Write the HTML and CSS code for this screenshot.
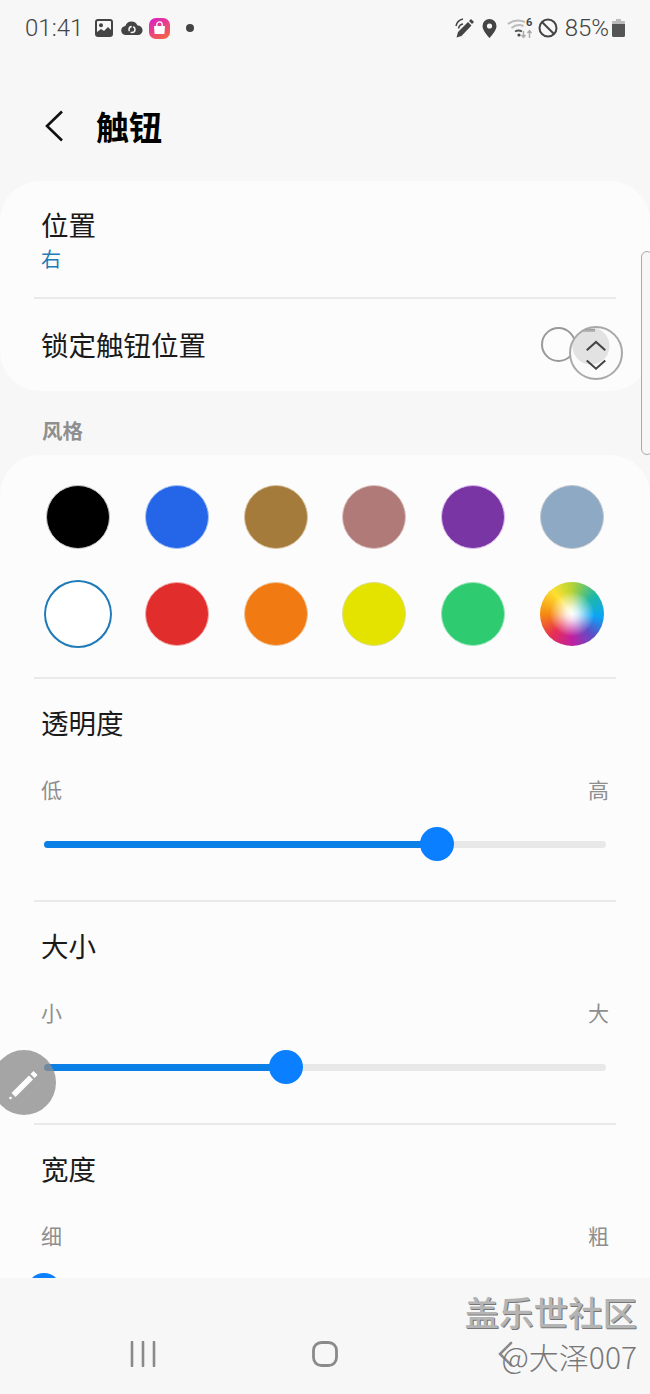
FILE: index.html
```html
<!DOCTYPE html>
<html lang="zh-CN">
<head>
<meta charset="UTF-8" />
<meta name="viewport" content="width=device-width, initial-scale=1"/>
<title>触钮</title>
<link rel="stylesheet" href="styles.css">
</head>
<body>
  <div class="phone">
    <div class="status-bar">
      <div class="status-left">
        <span class="clock">01:41</span>
        <svg class="ic-image" viewBox="0 0 18 18"><rect width="18" height="18" rx="3" fill="#444"/><rect x="2" y="2" width="14" height="14" rx="1" fill="#f7f7f7"/><circle cx="6" cy="6.2" r="2" fill="#444"/><path d="M2 16v-3l4-3 3 2 4-4 3 3v5z" fill="#444"/></svg>
        <svg class="ic-cloud" viewBox="0 0 22 16"><path d="M5 15a4.500 4.500 0 0 1-.6-9A6.500 6.500 0 0 1 16.500 5.400 4.800 4.800 0 0 1 17 15z" fill="#444"/><circle cx="11" cy="9.500" r="3" fill="none" stroke="#f7f7f7" stroke-width="1.500" stroke-dasharray="6 1.500"/></svg>
        <svg class="ic-shop" viewBox="0 0 21 21">
          <defs><linearGradient id="shopGrad" x1="0" y1="0" x2="0.6" y2="1"><stop offset="0" stop-color="#d81ad0"/><stop offset="1" stop-color="#f5604a"/></linearGradient></defs>
          <rect width="21" height="21" rx="7" fill="url(#shopGrad)"/>
          <path d="M5 8h11l-.6 8H5.600z" fill="#fff"/><path d="M7.800 8V6.500a2.700 2.700 0 0 1 5.400 0V8" fill="none" stroke="#fff" stroke-width="1.300"/>
        </svg>
        <span class="status-dot"></span>
      </div>
      <div class="status-right">
        <svg class="ic-pen" viewBox="0 0 19 20"><path d="M1.500 19.500l1.500-5.500L13 4l3.500 3.500L6.500 18z" fill="#444"/><path d="M14 3l2-2 3 3-2 2z" fill="#444"/><path d="M1 8a9 9 0 0 1 7-7M3.500 10.500a5.500 5.500 0 0 1 4.500-4.500" fill="none" stroke="#444" stroke-width="1.500"/></svg>
        <svg class="ic-pin" viewBox="0 0 15 19"><path d="M7.500 0A7 7 0 0 0 .5 7c0 4.800 7 12 7 12s7-7.200 7-12a7 7 0 0 0-7-7z" fill="#444"/><circle cx="7.500" cy="7" r="2.600" fill="#f7f7f7"/></svg>
        <svg class="ic-wifi" viewBox="0 0 27 22">
          <path d="M1 7a17 17 0 0 1 17-2M4.500 11a12 12 0 0 1 12-2" fill="none" stroke="#bbb" stroke-width="2"/>
          <path d="M8 14.500a7 7 0 0 1 7 0" fill="none" stroke="#555" stroke-width="2"/><circle cx="12" cy="18" r="1.600" fill="#444"/>
          <text x="19" y="9" class="wifi-six">6</text>
          <path d="M16.500 14v6m-2-2l2 2.500 2-2.500" fill="none" stroke="#aaa" stroke-width="1.400"/>
          <path d="M22.500 21v-7m-2 2l2-2.500 2 2.500" fill="none" stroke="#aaa" stroke-width="1.400"/>
        </svg>
        <svg class="ic-block" viewBox="0 0 20 20"><circle cx="10" cy="10" r="8.500" fill="none" stroke="#444" stroke-width="2"/><path d="M4 4l12 12" stroke="#444" stroke-width="2"/></svg>
        <span class="battery-text">85%</span>
        <svg class="ic-battery" viewBox="0 0 13 18"><path d="M4 0h5v2H4z" fill="#bbb"/><rect y="2" width="13" height="3" rx="1" fill="#bbb"/><path d="M0 5h13v11.500a1.500 1.500 0 0 1-1.500 1.500h-10A1.500 1.500 0 0 1 0 16.500z" fill="#555"/></svg>
      </div>
    </div>

    <header class="page-header">
      <svg class="back-icon" viewBox="0 0 20 32"><path d="M18 1.500L3 16l15 14.500" fill="none" stroke="#111" stroke-width="2.600"/></svg>
      <h1>触钮</h1>
    </header>

    <section class="card">
      <div class="row row-position">
        <div class="row-title">位置</div>
        <div class="row-value">右</div>
      </div>
      <div class="divider"></div>
      <div class="row row-lock">
        <div class="row-title">锁定触钮位置</div>
        <div class="toggle"></div>
      </div>
    </section>

    <div class="section-label">风格</div>

    <section class="card card-style">
      <div class="swatches">
        <span class="swatch swatch-black"></span>
        <span class="swatch swatch-blue"></span>
        <span class="swatch swatch-brown"></span>
        <span class="swatch swatch-rose"></span>
        <span class="swatch swatch-purple"></span>
        <span class="swatch swatch-steel"></span>
        <span class="swatch swatch-white"></span>
        <span class="swatch swatch-red"></span>
        <span class="swatch swatch-orange"></span>
        <span class="swatch swatch-yellow"></span>
        <span class="swatch swatch-green"></span>
        <span class="swatch swatch-wheel"></span>
      </div>
      <div class="divider"></div>
      <div class="setting">
        <div class="row-title">透明度</div>
        <div class="scale"><span>低</span><span>高</span></div>
        <div class="slider"><div class="slider-fill" style="width: 70%"></div><div class="slider-thumb" style="left: 70%"></div></div>
      </div>
      <div class="divider"></div>
      <div class="setting">
        <div class="row-title">大小</div>
        <div class="scale"><span>小</span><span>大</span></div>
        <div class="slider"><div class="slider-fill" style="width: 43%"></div><div class="slider-thumb" style="left: 43%"></div></div>
      </div>
      <div class="divider"></div>
      <div class="setting">
        <div class="row-title">宽度</div>
        <div class="scale"><span>细</span><span>粗</span></div>
        <div class="slider"><div class="slider-fill" style="width: 0"></div><div class="slider-thumb" style="left: 0"></div></div>
      </div>
    </section>

    <nav class="nav-bar">
      <svg class="nav-icon" viewBox="0 0 26 26"><path d="M2 1v24M13 1v24M24 1v24" stroke="#8a8a8a" stroke-width="2.600" stroke-linecap="round"/></svg>
      <svg class="nav-icon" viewBox="0 0 26 26"><rect x="1.500" y="1.500" width="23" height="23" rx="8" fill="none" stroke="#8a8a8a" stroke-width="2.800"/></svg>
      <svg class="nav-icon" viewBox="0 0 26 26"><path d="M17 2L6 13l11 11" fill="none" stroke="#8a8a8a" stroke-width="2.600" stroke-linecap="round"/></svg>
    </nav>

    <!-- things floating over the page -->
    <div class="handle"></div>
    <div class="lens">
      <svg viewBox="0 0 54 54"><path d="M17 25l10-9 10 9M17 36l10 9 10-9" transform="translate(0 -1)" fill="none" stroke="#444" stroke-width="2.200"/></svg>
    </div>
    <div class="pen-button">
      <svg viewBox="0 0 34 34"><path d="M3.500 27L21 9.500l4 4L7.500 31z" fill="#fff"/><path d="M22.500 8l3-3 4 4-3 3z" fill="#fff"/><circle cx="2.500" cy="32" r="1.300" fill="#fff"/></svg>
    </div>
    <div class="watermark">
      <div class="wm-main">盖乐世社区</div>
      <div class="wm-sub">@大泽007</div>
    </div>
  </div>
</body>
</html>
```

FILE: styles.css
```css
html, body {
  margin: 0;
  padding: 0;
  background: #f7f7f7;
}
.phone {
  position: relative;
  width: 650px;
  height: 1394px;
  overflow: hidden;
  display: flex;
  flex-direction: column;
  background: #f7f7f7;
  color: #111;
  font-family: "Noto Sans CJK SC", Roboto, sans-serif;
}

/* status bar */
.status-bar {
  flex: none;
  height: 52px;
  padding: 2px 25px 0 25px;
  display: flex;
  justify-content: space-between;
  align-items: center;
  color: #444;
  font-family: Roboto, sans-serif;
}
.status-left, .status-right {
  display: flex;
  align-items: center;
}
.clock {
  font-size: 24px;
  font-weight: 300;
  margin-right: 12px;
}
.ic-image { width: 18px; height: 18px; margin-right: 8px; }
.ic-cloud { width: 22px; height: 16px; margin-right: 6px; }
.ic-shop { width: 21px; height: 21px; margin-right: 16px; }
.status-dot {
  width: 8px;
  height: 8px;
  border-radius: 50%;
  background: #444;
}
.ic-pen { width: 19px; height: 20px; margin-right: 8px; }
.ic-pin { width: 15px; height: 19px; margin-right: 10px; }
.ic-wifi { width: 27px; height: 22px; margin-right: 4px; }
.wifi-six { font-size: 11px; font-weight: 700; fill: #444; font-family: Roboto, sans-serif; }
.ic-block { width: 20px; height: 20px; margin-right: 7px; }
.battery-text { font-size: 24px; font-weight: 300; margin-right: 3px; }
.ic-battery { width: 13px; height: 18px; }

/* header */
.page-header {
  flex: none;
  height: 74px;
  padding: 35px 0 18px 44px;
  display: flex;
  align-items: center;
}
.back-icon { width: 20px; height: 32px; margin-right: 32px; }
h1 {
  margin: 0;
  font-size: 33px;
  font-weight: 700;
  color: #000;
}

/* cards */
.card {
  flex: none;
  background: #fcfcfc;
  border-radius: 40px;
}
.card-style {
  flex: 1 1 0;
  min-height: 0;
  overflow: hidden;
  border-radius: 40px 40px 0 0;
}
.divider {
  height: 2px;
  margin: 0 34px;
  background: #e9e9e9;
}
.row { padding: 0 41px; }
.row-title {
  font-size: 27.500px;
  line-height: 36px;
  color: #1a1a1a;
}
.row-position { padding-top: 25px; padding-bottom: 24px; }
.row-value {
  margin-top: 3px;
  font-size: 20px;
  line-height: 28px;
  color: #1f7ab8;
}
.row-lock {
  height: 92px;
  display: flex;
  justify-content: space-between;
  align-items: center;
  padding-right: 41px;
  padding-bottom: 2px;
  box-sizing: border-box;
}
.toggle {
  width: 68px;
  height: 35px;
  box-sizing: border-box;
  border-radius: 17px;
  position: relative;
}
.toggle::before {
  content: "";
  position: absolute;
  left: 0;
  top: 0;
  width: 35px;
  height: 35px;
  box-sizing: border-box;
  border: 2px solid #999;
  border-radius: 50%;
  background: #fcfcfc;
}
.section-label {
  flex: none;
  padding: 25px 42px 11px;
  font-size: 20.500px;
  line-height: 28px;
  font-weight: 700;
  color: #8f8f8f;
}

/* colour swatches */
.swatches {
  display: grid;
  grid-template-columns: repeat(6, 64px);
  column-gap: 34.800px;
  row-gap: 33px;
  padding: 30px 0 31px 46px;
}
.swatch {
  width: 64px;
  height: 64px;
  box-sizing: border-box;
  border-radius: 50%;
  border: 1px solid rgba(0, 0, 0, 0.18);
}
.swatch-black { background: #000; border-color: #c4c4c4; }
.swatch-blue { background: #2566e8; border-color: #a4c2f4; }
.swatch-brown { background: #a47b3a; border-color: #d8c3a0; }
.swatch-rose { background: #b07a78; border-color: #dcc4c4; }
.swatch-purple { background: #7a35a5; border-color: #dcb8f0; }
.swatch-steel { background: #8da9c4; border-color: #c4c9cf; }
.swatch-white {
  background: #fff;
  border-color: #fff;
  box-shadow: 0 0 0 2px #1f7ab8;
}
.swatch-red { background: #e22d2d; border-color: #f5a8a8; }
.swatch-orange { background: #f17b12; border-color: #efc49c; }
.swatch-yellow { background: #e4e300; border-color: #dedd88; }
.swatch-green { background: #2fcb70; border-color: #98e4b8; }
.swatch-wheel {
  border: none;
  background:
    radial-gradient(closest-side, #fff 0, rgba(255, 255, 255, 0.8) 20%, rgba(255, 255, 255, 0) 70%),
    conic-gradient(#b5d335, #1fb8a5 50deg, #0aa5f5 95deg, #5a50c8 135deg, #c020a0 180deg, #e83050 225deg, #f58a10 270deg, #ffe030 320deg, #b5d335);
}

/* sliders */
.setting {
  height: 221px;
  box-sizing: border-box;
  padding: 25px 41px 0 41px;
}
.scale {
  display: flex;
  justify-content: space-between;
  margin-top: 35px;
  font-size: 21px;
  line-height: 28px;
  color: #8e8e8e;
}
.slider {
  position: relative;
  height: 7px;
  margin: 38px 3px 0 3px;
  border-radius: 4px;
  background: #e8e8e8;
}
.slider-fill {
  height: 100%;
  border-radius: 4px;
  background: #0a7fe6;
}
.slider-thumb {
  position: absolute;
  top: -14px;
  width: 34px;
  height: 34px;
  margin-left: -17px;
  border-radius: 50%;
  background: #0a7fff;
}

/* nav bar */
.nav-bar {
  flex: none;
  height: 116px;
  box-sizing: border-box;
  padding: 63px 52px 0;
  display: grid;
  grid-template-columns: repeat(3, 182px);
  justify-items: center;
  align-items: start;
  background: #f7f7f7;
}
.nav-icon { width: 26px; height: 26px; }

/* overlays */
.handle {
  position: absolute;
  left: 641px;
  top: 251px;
  width: 12px;
  height: 204px;
  box-sizing: border-box;
  border: 1.500px solid #aaa;
  border-radius: 8px;
  background: #f7f7f7;
}
.lens {
  position: absolute;
  left: 569px;
  top: 326px;
  width: 54px;
  height: 54px;
  box-sizing: border-box;
  border: 2px solid #a8a8a8;
  border-radius: 50%;
  background:
    linear-gradient(#9a9a9a, #bdbdbd) 6px 1px / 18px 3px no-repeat,
    radial-gradient(circle at 20px 18px, #e2e2e2 0 18px, #fbfbfb 19px);
}
.lens svg { width: 50px; height: 50px; display: block; }
.pen-button {
  position: absolute;
  left: -8px;
  top: 1050px;
  width: 64px;
  height: 65px;
  border-radius: 50%;
  background: rgba(140, 140, 140, 0.78);
  display: flex;
  align-items: center;
  justify-content: center;
}
.pen-button svg { width: 34px; height: 34px; margin-left: 2px; }
.watermark {
  position: absolute;
  right: 13px;
  top: 1288px;
  text-align: right;
}
.wm-main {
  font-size: 34.500px;
  line-height: 46px;
  font-weight: 500;
  color: #b4b4b4;
  text-shadow: 1px 1px 0 #777;
}
.wm-sub {
  margin-top: 2px;
  font-size: 30px;
  line-height: 40px;
  color: #777;
  font-weight: 300;
}
```
